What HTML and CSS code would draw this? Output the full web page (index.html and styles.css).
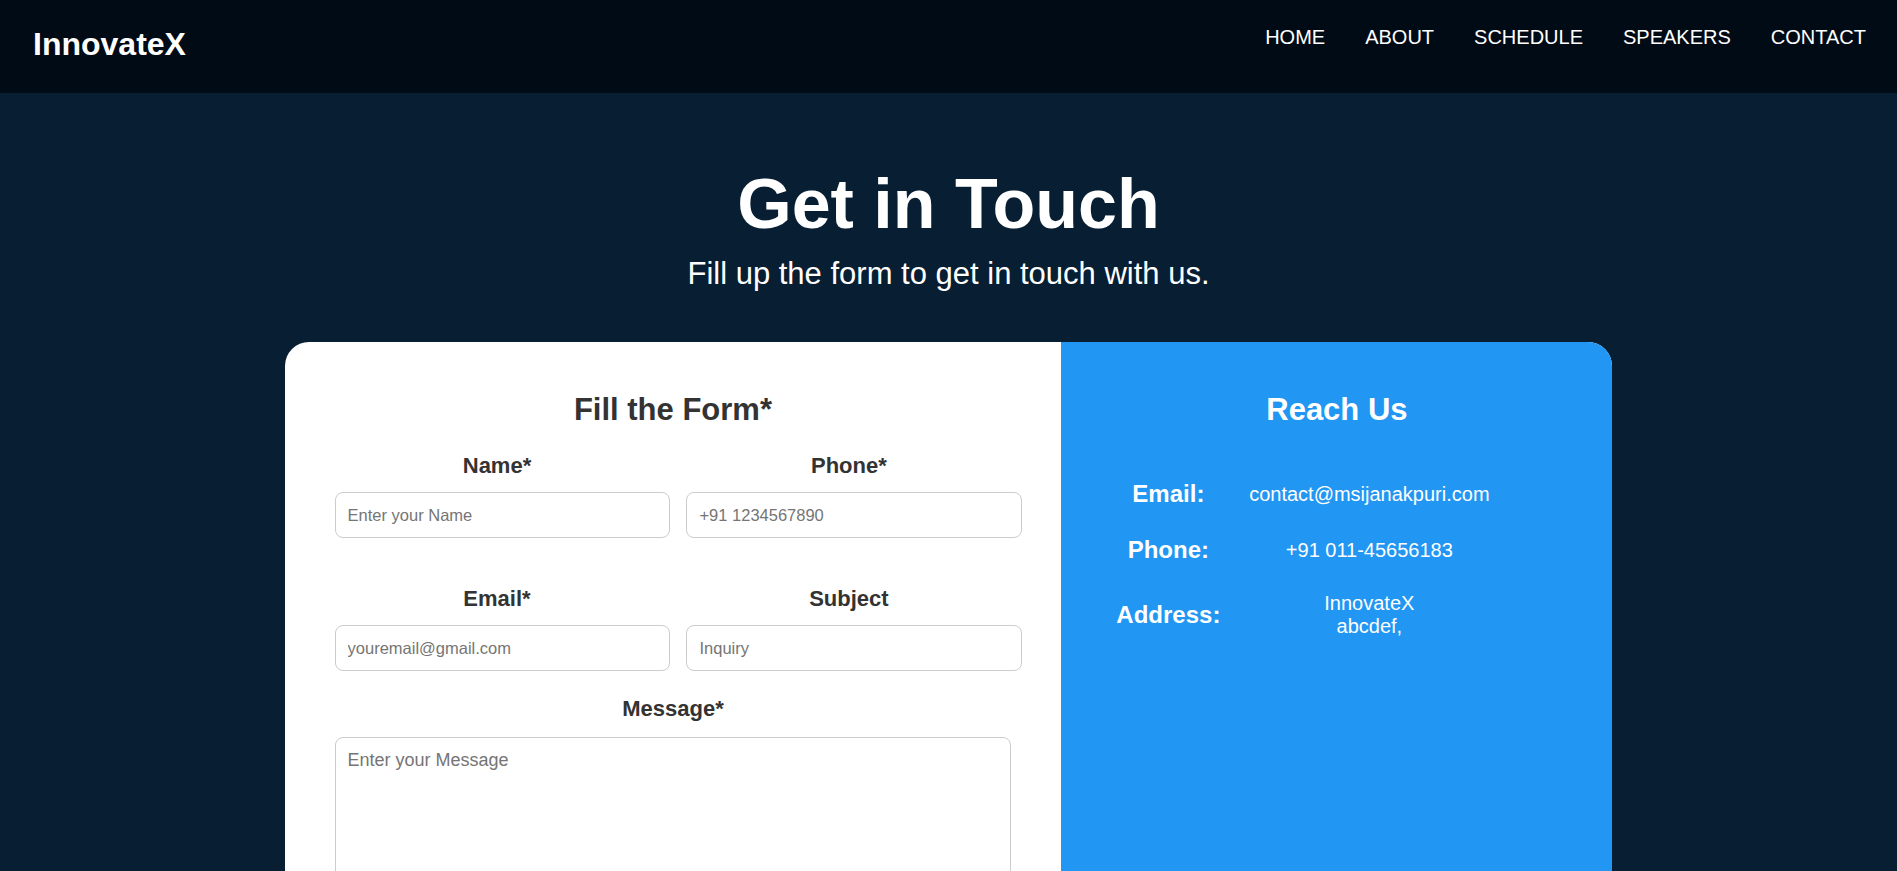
FILE: index.html
```html
<!DOCTYPE html>
<html lang="en">
<head>
<meta charset="utf-8">
<title>InnovateX - Contact</title>
<link rel="stylesheet" href="styles.css">
</head>
<body>
<header class="site-header">
  <div class="logo">InnovateX</div>
  <nav class="main-nav">
    <a href="#">HOME</a>
    <a href="#">ABOUT</a>
    <a href="#">SCHEDULE</a>
    <a href="#">SPEAKERS</a>
    <a href="#">CONTACT</a>
  </nav>
</header>
<main class="contact">
  <h1 class="contact-title">Get in Touch</h1>
  <p class="contact-sub">Fill up the form to get in touch with us.</p>
  <div class="contact-card">
    <form class="contact-form">
      <h2 class="panel-title">Fill the Form*</h2>
      <div class="form-row row-first">
        <div class="field">
          <label>Name*</label>
          <input type="text" placeholder="Enter your Name">
        </div>
        <div class="field">
          <label>Phone*</label>
          <input type="text" placeholder="+91 1234567890">
        </div>
      </div>
      <div class="form-row">
        <div class="field">
          <label>Email*</label>
          <input type="text" placeholder="youremail@gmail.com">
        </div>
        <div class="field">
          <label>Subject</label>
          <input type="text" placeholder="Inquiry">
        </div>
      </div>
      <div class="field field-message">
        <label>Message*</label>
        <textarea placeholder="Enter your Message"></textarea>
      </div>
    </form>
    <aside class="reach">
      <h2 class="panel-title">Reach Us</h2>
      <dl class="reach-grid">
        <dt>Email:</dt>
        <dd>contact@msijanakpuri.com</dd>
        <dt>Phone:</dt>
        <dd>+91 011-45656183</dd>
        <dt>Address:</dt>
        <dd>InnovateX<br>abcdef,</dd>
      </dl>
    </aside>
  </div>
</main>
</body>
</html>
```
FILE: styles.css
```css
body {
  margin: 0;
  background: #071e33;
  font-family: "Liberation Sans", Arial, sans-serif;
}

.site-header {
  height: 93px;
  box-sizing: border-box;
  background: #010b15;
  display: flex;
  justify-content: space-between;
  align-items: flex-start;
  padding: 26px 31px 0 33px;
}

.logo {
  color: #fff;
  font-size: 32px;
  font-weight: bold;
}

.main-nav {
  display: flex;
  gap: 40px;
}

.main-nav a {
  color: #fff;
  font-size: 20px;
  text-decoration: none;
}

.contact {
  padding-top: 72px;
  text-align: center;
  color: #fff;
}

.contact-title {
  margin: 0;
  font-size: 70px;
  font-weight: 900;
  line-height: 78px;
}

.contact-sub {
  margin: 13px 0 0;
  font-size: 31px;
}

.contact-card {
  width: 70%;
  margin: 50px auto 0;
  display: flex;
  border-radius: 24px;
  overflow: hidden;
  background: #fff;
}

.contact-form {
  width: 58.5%;
  flex: none;
  box-sizing: border-box;
  padding: 50px;
  color: #333;
}

.panel-title {
  margin: 0 0 25px;
  font-size: 31px;
  font-weight: bold;
  text-align: center;
}

.form-row {
  display: grid;
  grid-template-columns: 1fr 1fr;
  column-gap: 27px;
}

.row-first {
  margin-bottom: 48px;
}

.field label {
  display: block;
  font-size: 22px;
  font-weight: bold;
  text-align: center;
  margin-bottom: 13px;
}

.field input {
  display: block;
  width: calc(100% + 11px);
  height: 46px;
  box-sizing: border-box;
  padding: 0 12px;
  border: 1px solid #ccc;
  border-radius: 8px;
  font-family: "Liberation Sans", Arial, sans-serif;
  font-size: 16.5px;
  color: #333;
}

.field-message {
  margin-top: 25px;
}

.field-message label {
  margin-bottom: 15px;
}

.field textarea {
  display: block;
  width: 100%;
  height: 220px;
  box-sizing: border-box;
  padding: 12px;
  border: 1px solid #ccc;
  border-radius: 8px;
  font-family: "Liberation Sans", Arial, sans-serif;
  font-size: 18px;
  resize: vertical;
}

.reach {
  flex: 1;
  background: #2196f3;
  padding: 50px;
  color: #fff;
}

.reach .panel-title {
  margin: 0;
}

.reach-grid {
  display: grid;
  grid-template-columns: 114px 288px;
  row-gap: 28px;
  align-items: center;
  margin: 52px 0 0;
  text-align: center;
}

.reach-grid dt {
  font-size: 24px;
  font-weight: bold;
}

.reach-grid dd {
  margin: 0;
  font-size: 20px;
}
```
